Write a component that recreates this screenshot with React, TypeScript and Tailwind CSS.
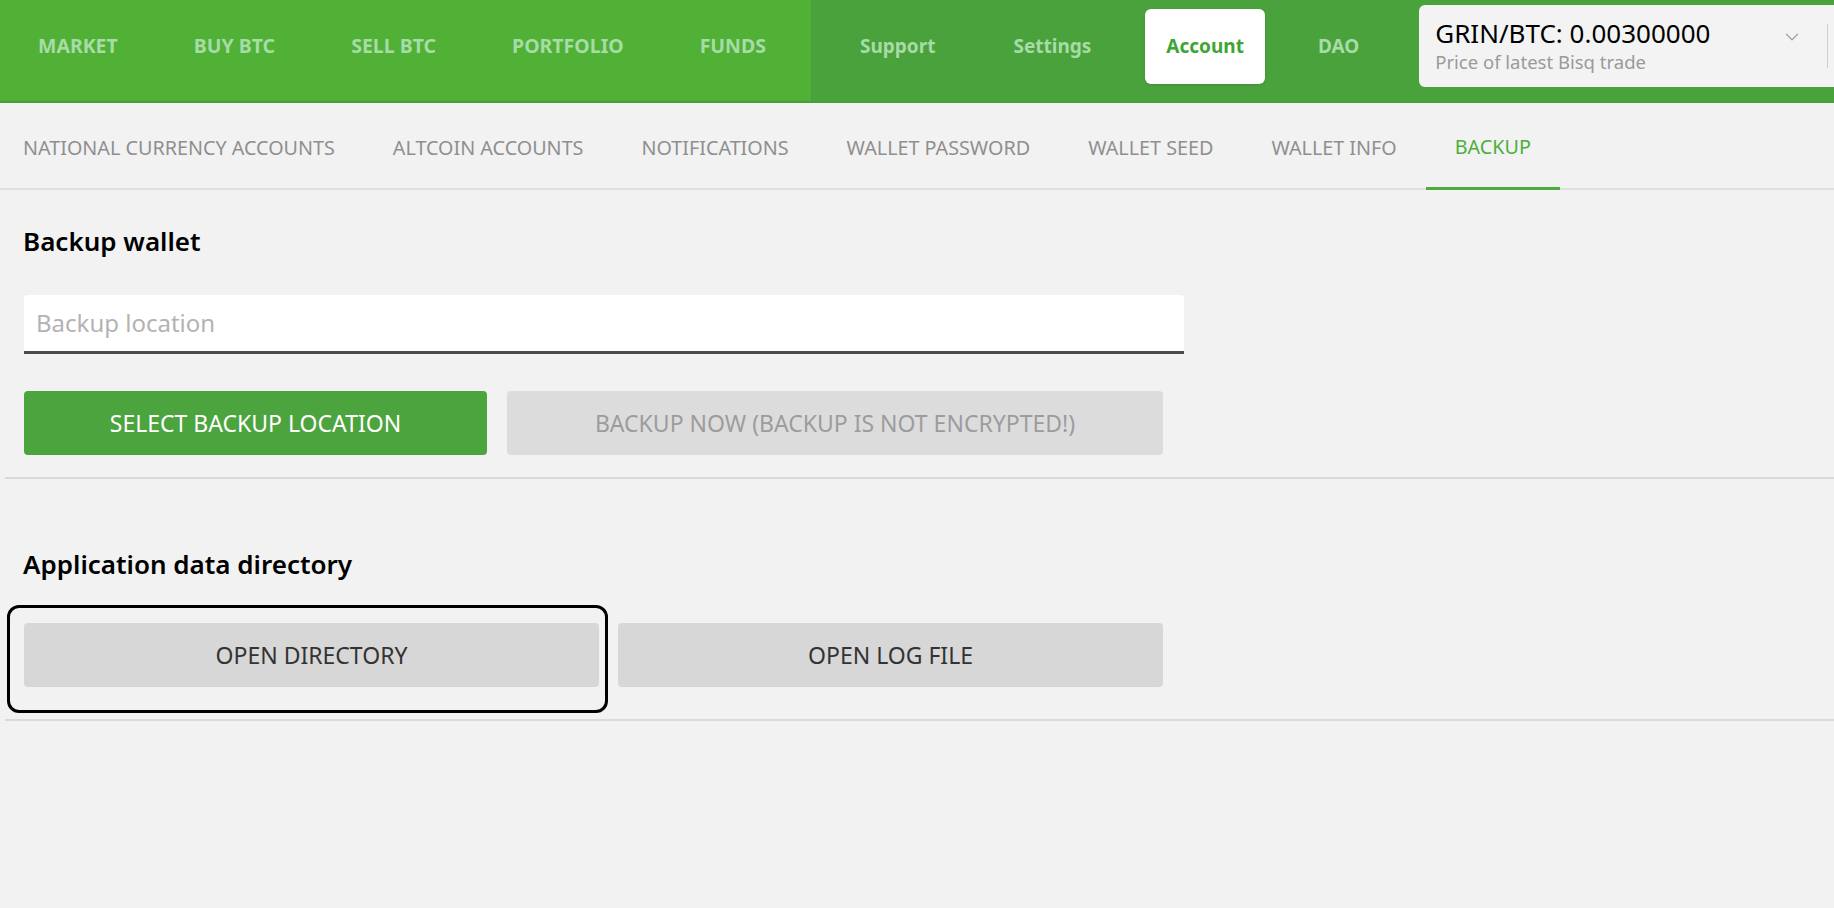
import { ChevronDown } from "lucide-react";

const mainNav = ["MARKET", "BUY BTC", "SELL BTC", "PORTFOLIO", "FUNDS"];

const tabs = [
  "NATIONAL CURRENCY ACCOUNTS",
  "ALTCOIN ACCOUNTS",
  "NOTIFICATIONS",
  "WALLET PASSWORD",
  "WALLET SEED",
  "WALLET INFO",
  "BACKUP",
];

export default function App() {
  return (
    <div className="min-h-[908px] w-full overflow-hidden bg-[#f2f2f2] font-['Noto_Sans',sans-serif]">
      {/* top navigation */}
      <header className="flex h-[103px] border-b-2 border-[#46a035] bg-[#51b036]">
        <nav className="flex w-[812px] shrink-0 items-center border-r border-[#47a03a] pb-[9px]">
          {mainNav.map((item) => (
            <span
              key={item}
              className="shrink-0 whitespace-nowrap px-[38px] text-[19.5px] font-bold text-[#a6dca6]"
            >
              {item}
            </span>
          ))}
        </nav>
        <div className="flex flex-1 items-center bg-[#4aa23c] pb-[9px] pl-[9px]">
          <span className="shrink-0 whitespace-nowrap px-[39px] text-[19px] font-bold text-[#a6dca6]">Support</span>
          <span className="shrink-0 whitespace-nowrap px-[39px] text-[19px] font-bold text-[#a6dca6]">Settings</span>
          <span className="mx-[15px] flex h-[75px] shrink-0 items-center rounded-[6px] bg-white px-[21px] text-[19px] font-bold text-[#3da632] shadow-sm">
            Account
          </span>
          <span className="shrink-0 whitespace-nowrap px-[38px] text-[19px] font-bold text-[#a6dca6]">DAO</span>
          <div className="ml-[22px] flex h-[82px] min-w-0 flex-1 items-center overflow-hidden rounded-l-[6px] bg-[#f3f3f3]">
            <div className="flex w-[408px] shrink-0 items-start justify-between pl-[16px] pr-[24px]">
              <div className="flex flex-col">
                <span className="whitespace-nowrap text-[26px] leading-[30px] text-black">GRIN/BTC: 0.00300000</span>
                <span className="mt-[2px] whitespace-nowrap text-[18.5px] leading-[24px] text-[#9a9a9a]">
                  Price of latest Bisq trade
                </span>
              </div>
              <ChevronDown className="mt-[8px] h-[22px] w-[22px] shrink-0 text-[#a0a0a0]" strokeWidth={1.3} />
            </div>
            <div className="h-[44px] w-px shrink-0 bg-[#cfcfcf]" />
          </div>
        </div>
      </header>

      {/* sub tabs */}
      <div className="flex h-[87px] border-b-2 border-[#e0e0e0]">
        <div className="-ml-[6px] flex">
          {tabs.map((tab) => (
            <span
              key={tab}
              className={
                tab === "BACKUP"
                  ? "-mb-[2px] flex items-center whitespace-nowrap border-b-[3px] border-[#4cae3a] px-[29px] pt-[4px] text-[19.75px] text-[#4cae3a]"
                  : "flex items-center whitespace-nowrap px-[29px] pt-[4px] text-[19.75px] text-[#8f8f8f]"
              }
            >
              {tab}
            </span>
          ))}
        </div>
      </div>

      {/* backup wallet */}
      <section className="pt-[34px]">
        <h2 className="pl-[23px] text-[26px] font-semibold leading-[34px] text-black">Backup wallet</h2>
        <div className="ml-[24px] mt-[37px] flex h-[59px] w-[1160px] items-center rounded-t-[4px] border-b-[3px] border-[#4b4b4b] bg-white px-[12px] text-[24px] text-[#b3b3b3]">
          Backup location
        </div>
        <div className="ml-[24px] mt-[37px] flex gap-[20px]">
          <button className="h-[64px] w-[463px] rounded-[4px] bg-[#4ca43e] text-[23px] text-white">
            SELECT BACKUP LOCATION
          </button>
          <button className="h-[64px] w-[656px] rounded-[4px] bg-[#dcdcdc] text-[23px] text-[#9c9c9c]">
            BACKUP NOW (BACKUP IS NOT ENCRYPTED!)
          </button>
        </div>
        <div className="ml-[5px] mt-[22px] h-[2px] bg-[#dadada]" />
      </section>

      {/* application data directory */}
      <section className="pt-[68px]">
        <h2 className="pl-[23px] text-[26px] font-semibold leading-[34px] text-black">
          Application data directory
        </h2>
        <div className="ml-[24px] mt-[42px] flex gap-[19px]">
          <div className="relative">
            <div className="absolute -bottom-[26px] -left-[17px] -right-[9px] -top-[18px] rounded-[12px] border-[3px] border-black" />
            <button className="relative h-[64px] w-[575px] rounded-[4px] bg-[#d7d7d7] text-[23px] text-[#333333]">
              OPEN DIRECTORY
            </button>
          </div>
          <button className="h-[64px] w-[545px] rounded-[4px] bg-[#d7d7d7] text-[23px] text-[#333333]">
            OPEN LOG FILE
          </button>
        </div>
        <div className="ml-[5px] mt-[32px] h-[2px] bg-[#dadada]" />
      </section>
    </div>
  );
}
